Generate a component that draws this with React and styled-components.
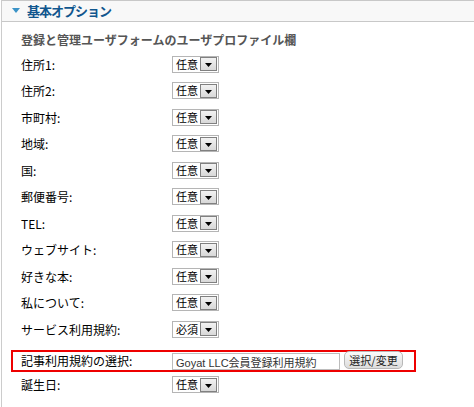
import React from "react";
import styled, { createGlobalStyle } from "styled-components";

const GlobalStyle = createGlobalStyle`
  html, body {
    margin: 0;
    padding: 0;
    background: #ffffff;
  }
  body {
    font-family: "Noto Sans CJK JP", "Liberation Sans", sans-serif;
    font-size: 12px;
    color: #000;
  }
`;

const rows = [
  { label: "住所1:", value: "任意" },
  { label: "住所2:", value: "任意" },
  { label: "市町村:", value: "任意" },
  { label: "地域:", value: "任意" },
  { label: "国:", value: "任意" },
  { label: "郵便番号:", value: "任意" },
  { label: "TEL:", value: "任意" },
  { label: "ウェブサイト:", value: "任意" },
  { label: "好きな本:", value: "任意" },
  { label: "私について:", value: "任意" },
  { label: "サービス利用規約:", value: "必須" },
];

const Select = ({ value }) => (
  <SelectBox>
    <SelectText>{value}</SelectText>
    <SelectArrow>
      <svg width="7" height="4" viewBox="0 0 7 4">
        <path d="M0 0 H7 L3.5 4 Z" fill="#000" />
      </svg>
    </SelectArrow>
  </SelectBox>
);

const App = () => {
  return (
    <>
      <GlobalStyle />
      <Panel>
        <Header>
          <svg width="8" height="6" viewBox="0 0 8 6">
            <path d="M0 0 H8 L4 5 Z" fill="#3b93c7" />
          </svg>
          <Title>基本オプション</Title>
        </Header>
        <Body>
          <Subtitle>登録と管理ユーザフォームのユーザプロファイル欄</Subtitle>
          {rows.map((r) => (
            <Row key={r.label}>
              <Label>{r.label}</Label>
              <Select value={r.value} />
            </Row>
          ))}
          <HighlightRow>
            <Label>記事利用規約の選択:</Label>
            <TextInput readOnly value="Goyat LLC会員登録利用規約" />
            <PickButton>選択/変更</PickButton>
          </HighlightRow>
          <Row>
            <Label>誕生日:</Label>
            <Select value="任意" />
          </Row>
        </Body>
      </Panel>
    </>
  );
};

export default App;

const Panel = styled.div`
  margin-left: 1px;
  border-left: 1px solid #cccccc;
  height: 407px;
  box-sizing: border-box;
`;

const Header = styled.div`
  display: flex;
  align-items: center;
  gap: 7px;
  height: 20px;
  padding-left: 10px;
  background: #f8f8f8;
  border-top: 1px solid #c8c8c8;
  border-bottom: 1px solid #c8c8c8;
  box-sizing: content-box;
`;

const Title = styled.span`
  font-size: 13px;
  font-weight: bold;
  letter-spacing: -1px;
  color: #10568e;
  line-height: 20px;
`;

const Body = styled.div`
  padding-left: 19px;
  padding-top: 8px;
`;

const Subtitle = styled.div`
  font-size: 12px;
  font-weight: bold;
  color: #555555;
  height: 21px;
  line-height: 20px;
`;

const Row = styled.div`
  display: flex;
  align-items: center;
  height: 26.5px;
`;

const Label = styled.span`
  width: 151px;
  flex-shrink: 0;
  font-size: 12px;
  color: #000;
`;

const SelectBox = styled.div`
  display: flex;
  align-items: center;
  width: 47px;
  height: 17px;
  box-sizing: border-box;
  border: 1px solid #b5b5b5;
  background: #fff;
`;

const SelectText = styled.span`
  flex: 1;
  padding-left: 3px;
  font-size: 11px;
  line-height: 15px;
  white-space: nowrap;
`;

const SelectArrow = styled.span`
  display: flex;
  align-items: center;
  justify-content: center;
  width: 17px;
  height: 14px;
  margin-right: 1px;
  box-sizing: border-box;
  border: 1px solid #808080;
  background: linear-gradient(#f2f2f2, #d8d8d8);
  svg {
    margin-top: 2px;
  }
`;

const HighlightRow = styled.div`
  display: flex;
  align-items: center;
  margin: 7px 0 0 -10px;
  width: 405px;
  height: 22px;
  box-sizing: border-box;
  border: 2px solid #ee0000;
  padding-left: 8px;
`;

const TextInput = styled.input`
  width: 168px;
  height: 17px;
  box-sizing: border-box;
  border: 1px solid #bcbcbc;
  padding: 0 3px;
  margin: 2px 0 0;
  font-family: "Liberation Sans", "Noto Sans CJK JP", sans-serif;
  font-size: 11px;
  color: #333;
  outline: none;
`;

const PickButton = styled.button`
  margin-left: 4px;
  margin-top: -2px;
  width: 59px;
  height: 18px;
  padding: 0;
  border: 1px solid #b8b8b8;
  border-radius: 5px;
  background: linear-gradient(#fbfbfb, #dcdcdc);
  font-family: "Noto Sans CJK JP", sans-serif;
  font-size: 11px;
  color: #222;
  line-height: 16px;
`;
